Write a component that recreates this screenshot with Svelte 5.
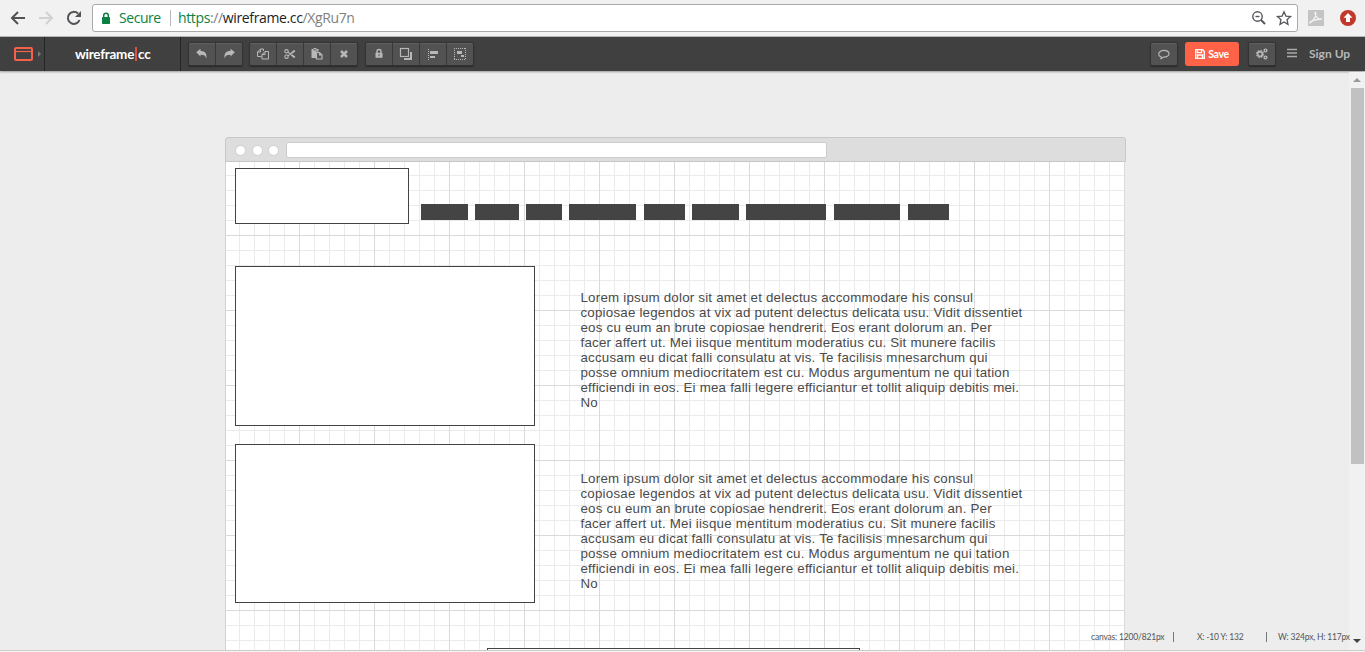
<script>
  const navBlocks = [[421, 47], [475, 44], [526, 36], [569, 67], [644, 41], [692, 47], [746, 80], [834, 66], [908, 41]];
  const boxes = [
    { x: 235, y: 168, w: 174, h: 56 },
    { x: 235, y: 266, w: 300, h: 160 },
    { x: 235, y: 444, w: 300, h: 159 },
    { x: 487, y: 648, w: 373, h: 60 }
  ];
  const lines = [
    'Lorem ipsum dolor sit amet et delectus accommodare his consul',
    'copiosae legendos at vix ad putent delectus delicata usu. Vidit dissentiet',
    'eos cu eum an brute copiosae hendrerit. Eos erant dolorum an. Per',
    'facer affert ut. Mei iisque mentitum moderatius cu. Sit munere facilis',
    'accusam eu dicat falli consulatu at vis. Te facilisis mnesarchum qui',
    'posse omnium mediocritatem est cu. Modus argumentum ne qui tation',
    'efficiendi in eos. Ei mea falli legere efficiantur et tollit aliquip debitis mei.',
    'No'
  ];
  const paragraphs = [290, 471];
  const groups = [['undo', 'redo'], ['copy', 'cut', 'paste', 'remove'], ['lock', 'order', 'align', 'group']];
</script>

{#snippet icon(name)}
  <svg class="icon" viewBox="0 0 14 14" width="14" height="14">
    {#if name === 'undo'}
      <path fill="currentColor" d="M1.200 5.200 5.500 1.800v2.100c4.400 0 6.600 2 5.800 7.500-.8-2.800-2.300-3.800-5.800-3.700v1.900z" />
    {:else if name === 'redo'}
      <path fill="currentColor" d="M12.800 5.200 8.500 1.800v2.100c-4.400 0-6.600 2-5.800 7.500.8-2.800 2.300-3.800 5.800-3.700v1.900z" />
    {:else if name === 'copy'}
      <path fill="none" stroke="currentColor" d="M5.500 9.500h-4V5l3-3h3v2M4.500 2v3h-3M6 7.500l3-3h3.500v7.500H6zM9 4.500v3H6" />
    {:else if name === 'cut'}
      <g fill="none" stroke="currentColor" stroke-width="1.100"><circle cx="3.500" cy="4.300" r="1.700" /><circle cx="3.500" cy="9.700" r="1.700" /><path d="M5 5.200 12 10M5 8.800 12 4M12 4l-1-.3-3 2.500M12 10l-1 .3-3-2.500" /></g>
    {:else if name === 'paste'}
      <path fill="currentColor" d="M1.500 2h2V1h3v1h2v2.500H6V11H1.500z" /><path fill="#555" d="M3.500 2.300h3v1h-3z" /><path fill="none" stroke="currentColor" stroke-width="1.200" d="M6.500 5.500h3l2.500 2.500v4H6.500zM9.500 5.500V8H12" />
    {:else if name === 'remove'}
      <path stroke="currentColor" stroke-width="2.500" d="m4 4 6 6M10 4l-6 6" />
    {:else if name === 'lock'}
      <path fill="none" stroke="currentColor" stroke-width="1.400" d="M5 6V4.500a2 2 0 0 1 4 0V6" /><rect fill="currentColor" x="3.500" y="5.800" width="7" height="5" rx=".6" /><path stroke="#555" d="M7 7.200v2" />
    {:else if name === 'order'}
      <path fill="currentColor" d="M10 5h3v8H5v-3h5z" /><rect x="1.500" y="1.500" width="8" height="8" fill="#505050" stroke="currentColor" stroke-width="1.200" /><path fill="none" stroke="#505050" d="M10.500 4v6.500H4" />
    {:else if name === 'align'}
      <path stroke="currentColor" stroke-dasharray="1 1" d="M2.500 2v11" /><path fill="currentColor" d="M4 4h8v3H4zM4 9h5v2H4z" />
    {:else if name === 'group'}
      <path fill="none" stroke="currentColor" stroke-dasharray="1 1" d="M1 1.500h12M1 12.500h12M1.500 1v12M12.500 1v12" /><path fill="currentColor" d="M4 4h5v3H4zM8 8h3v2H8z" />
    {:else if name === 'comment'}
      <path fill="none" stroke="currentColor" stroke-width="1.100" d="M4.500 10C1 9 .8 5.800 3.600 4.200 6.500 2.600 12 3.500 12 6.700c0 2.300-2.600 3.500-5.500 3.400L3.500 12q1-1 1-2" />
    {:else if name === 'cogs'}
      <g fill="none" stroke="currentColor"><circle cx="5" cy="7" r="2.400" stroke-width="1.700" /><circle cx="5" cy="7" r="3.700" stroke-dasharray="1.600 1.300" /><circle cx="10.500" cy="3.500" r="1.400" stroke-width="1.400" /><circle cx="10.500" cy="10.500" r="1.400" stroke-width="1.400" /></g>
    {/if}
  </svg>
{/snippet}

<div class="screen">
  <header class="chrome">
    <div class="navigation">
      <svg width="84" height="28" viewBox="0 0 84 28" fill="none" stroke-width="2">
        <path stroke="#505256" d="M25 14H12M18 8l-6 6 6 6" />
        <path stroke="#d1d1d1" d="M39 14h13M46 8l6 6-6 6" />
        <path stroke="#505256" d="M79.500 16A6 6 0 1 1 78 9.500" /><path fill="#505256" d="M81 7v6h-6z" />
      </svg>
    </div>
    <div class="address">
      <svg class="padlock" width="10" height="13" viewBox="0 0 10 13"><path fill="none" stroke="#0b8043" stroke-width="1.500" d="M2.700 6V3.500a2.300 2.300 0 0 1 4.600 0V6" /><rect x="1" y="5" width="8" height="7" rx=".7" fill="#0b8043" /></svg>
      <span class="secure">Secure</span><i></i>
      <span class="url"><b>https</b>://<em>wireframe.cc</em>/XgRu7n</span>
      <svg class="tools" width="42" height="18" viewBox="0 0 42 18" fill="none" stroke="#55575b">
        <circle cx="5.500" cy="7.500" r="4.700" stroke-width="1.400" /><path stroke-width="1.400" d="M3.500 7.500h4" /><path stroke-width="2" d="m9 11 4 4" />
        <path stroke-width="1.300" d="m32 2.800 1.900 4.300 4.600.5-3.500 3.100 1 4.600-4-2.400-4 2.400 1-4.600-3.500-3.100 4.600-.5z" />
      </svg>
    </div>
    <svg class="extensions" width="54" height="20" viewBox="0 0 54 20">
      <rect x="2" y="2" width="16" height="16" fill="#c4c4c4" /><path fill="none" stroke="#f3f3f3" stroke-width="1.300" d="M9 4c2 1 0 8-5 11-1-1 4-4 12-4-4 1-7-3-7-7" />
      <circle cx="42" cy="10" r="8" fill="#c0392b" /><path fill="#fff" d="m42 5 4.500 4.700H44V14h-4V9.700h-2.500z" />
    </svg>
  </header>

  <div class="toolbar">
    <div class="device">
      <svg width="32" height="16" viewBox="0 0 32 16"><rect x="2" y="2" width="17" height="12" rx="1" fill="none" stroke="#f4624b" stroke-width="2" /><path stroke="#f4624b" stroke-width="1.200" d="M2 5.500h17" /><path fill="#777" d="m25 5 3 3-3 3z" /></svg>
    </div>
    <div class="brand"><span>wireframe</span><i></i><span>cc</span></div>
    <div class="groups">
      {#each groups as group}
        <div class="group">
          {#each group as name}<button aria-label={name}>{@render icon(name)}</button>{/each}
        </div>
      {/each}
    </div>
    <div class="account">
      <div class="group"><button aria-label="comment">{@render icon('comment')}</button></div>
      <button class="save">
        <svg width="10" height="10" viewBox="0 0 10 10" fill="none" stroke="#fff" stroke-width="1.300"><path d="M.7.700h7L9.300 2.500v6.800H.700zM2.500 1v2.700h4V1M2.500 9V6h5v3" /></svg><span>Save</span>
      </button>
      <div class="group settings"><button aria-label="settings">{@render icon('cogs')}</button></div>
      <svg class="menu" width="10" height="10" viewBox="0 0 10 10"><path stroke="#aaa" stroke-width="1.300" d="M0 1.500h10M0 5h10M0 8.500h10" /></svg>
      <span class="signup">Sign Up</span>
    </div>
  </div>

  <main class="workspace">
    <div class="window">
      <div class="titlebar"><span></span><span></span><span></span><div class="field"></div></div>
      <div class="grid"></div>
    </div>
  </main>

  <div class="drawing">
    {#each boxes as b}<div class="box" style="left:{b.x}px;top:{b.y}px;width:{b.w}px;height:{b.h}px"></div>{/each}
    {#each navBlocks as [x, w]}<div class="block" style="left:{x}px;width:{w}px"></div>{/each}
    {#each paragraphs as top}
      <div class="paragraph" style="top:{top}px">{#each lines as line}<div>{line}</div>{/each}</div>
    {/each}
  </div>

  <div class="scrollbar"><span class="up"></span><span class="thumb"></span><span class="down"></span></div>
  <div class="status"><span class="size">canvas: 1200/821px</span><i></i><span class="pos">X: -10 Y: 132</span><i></i><span class="dims">W: 324px, H: 117px</span></div>
  <div class="edge"></div>
</div>

<style>
  :global(body) { overflow: hidden; }
  * { box-sizing: border-box; }
  .screen { position: relative; width: 1365px; height: 652px; overflow: hidden; background: #ededed; display: flex; flex-direction: column; font-family: Lato, sans-serif; }
  .chrome { height: 37px; flex: none; display: flex; align-items: flex-start; padding-top: 4px; background: #f1f1f1; border-bottom: 1px solid #b4b7b5; }
  .navigation { width: 92px; height: 28px; flex: none; }
  .address { width: 1206px; height: 28px; flex: none; display: flex; align-items: center; background: #fff; border: 1px solid #a9a9a9; border-radius: 3px; font: 14px/26px "Open Sans", sans-serif; padding-left: 8px; }
  .secure { width: 42px; margin-left: 8px; color: #0b8043; white-space: nowrap; letter-spacing: -.45px; }
  .address > i { width: 1px; height: 16px; background: #b8b8b8; margin: 0 7px 0 9px; }
  .url { color: #808080; letter-spacing: -.37px; white-space: nowrap; }
  .url b { color: #0b8043; font-weight: 400; }
  .url em { color: #222; font-style: normal; }
  .tools { margin-left: auto; margin-right: 3px; }
  .extensions { margin: 4px 0 0 8px; flex: none; }

  .toolbar { position: relative; height: 34px; flex: none; display: flex; background: #404040; box-shadow: 0 1px 2px #999; color: #b8b8b8; }
  .device { width: 45px; padding: 9px 0 0 13px; border-right: 1px solid #242424; }
  .brand { width: 136px; display: flex; align-items: center; padding: 0 0 1px 30px; border-right: 1px solid #242424; color: #fff; font-weight: 700; font-size: 13.500px; letter-spacing: -.25px; }
  .brand span:first-child { width: 60px; }
  .brand i { flex: none; width: 2px; height: 14px; background: #d95443; margin-right: 1px; }
  .groups { display: flex; padding: 5px 0 0 7px; }
  .groups .group:nth-child(2) { margin-left: 6px; }
  .groups .group:nth-child(3) { margin-left: 7px; }
  .group { height: 24px; display: flex; border: 1px solid #333; border-radius: 2px; background: #525252; box-shadow: 0 1px 1px #2a2a2a, inset 0 1px #606060; }
  .group button { width: 26px; padding: 0; border: 0; background: none; color: #b8b8b8; display: flex; align-items: center; justify-content: center; }
  .group button + button { width: 27px; border-left: 1px solid #393939; }
  .account { margin-left: auto; display: flex; padding: 5px 15px 0 0; }
  .save { width: 54px; height: 24px; margin: 0 9px 0 7px; padding: 0; border: 0; border-radius: 3px; background: #ff6347; color: #fff; font: 700 10.500px Lato, sans-serif; letter-spacing: -.35px; display: flex; align-items: center; justify-content: center; gap: 3px; }
  .save svg, .save span { margin-bottom: 1px; }
  .menu { margin: 6px 12px 0 11px; }
  .signup { width: 41px; white-space: nowrap; font-size: 12px; font-weight: 700; line-height: 24px; }

  .workspace { height: 579px; flex: none; padding: 66px 0 0 225px; overflow: hidden; }
  .window { width: 901px; }
  .titlebar { height: 25px; display: flex; align-items: center; background: #ddd; border: 1px solid #c8c8c8; border-radius: 3px 3px 0 0; padding: 1px 0 0 9px; }
  .titlebar span { width: 11px; height: 11px; margin-right: 6px; border: 1px solid #cfcfcf; border-radius: 50%; background: #fff; }
  .titlebar .field { width: 541px; height: 16px; border: 1px solid #ccc; border-radius: 2px; background: #fff; }
  .titlebar span:nth-child(2) { margin-right: 5px; }
  .titlebar span:nth-child(3) { margin-right: 7px; }
  .grid { width: 900px; height: 495px; margin-top: -1px; border-top: 1px solid #c8c8c8; background-color: #fff; background-origin: border-box;
    background-image: linear-gradient(90deg, transparent 74px, #dadada 74px), linear-gradient(transparent 74px, #dadada 74px), linear-gradient(90deg, transparent 14px, #ebebeb 14px), linear-gradient(transparent 14px, #ebebeb 14px);
    background-size: 75px 75px, 75px 75px, 15px 15px, 15px 15px; box-shadow: inset 1px 0 #d2d2d2; }
  .drawing { position: absolute; inset: 0 0 2px; overflow: hidden; pointer-events: none; }
  .box { position: absolute; background: #fff; border: 1px solid #434343; }
  .block { position: absolute; top: 204px; height: 16px; background: #444; }
  .paragraph { position: absolute; left: 580.500px; color: #4a4a4a; font: 13.330px/15px "Liberation Sans", Arial, sans-serif; letter-spacing: .208px; white-space: nowrap; }

  .scrollbar { position: absolute; right: 0; top: 72px; bottom: 2px; width: 16px; background: #f1f1f1; display: flex; flex-direction: column; align-items: center; }
  .up { border: 4px solid transparent; border-top: 0; border-bottom: 4px solid #999; margin: 6px 0; }
  .thumb { width: 13px; height: 376px; margin-left: 1px; background: #c1c1c1; }
  .down { border: 4px solid transparent; border-bottom: 0; border-top: 4px solid #444; margin-top: auto; margin-bottom: 7px; }
  .status { position: absolute; left: 1091px; top: 630px; height: 14px; display: flex; align-items: center; color: #555; font-size: 8.500px; line-height: 14px; letter-spacing: -.18px; white-space: nowrap; }
  .status span { flex: none; }
  .status i { width: 1px; height: 10px; background: #777; }
  .size { width: 82px; }
  .pos { width: 92px; padding-left: 23px; }
  .dims { padding-left: 11px; }
  .edge { position: absolute; inset: auto 0 0; height: 2px; border-top: 1px solid #ccc; background: #f5f5f5; }
</style>
